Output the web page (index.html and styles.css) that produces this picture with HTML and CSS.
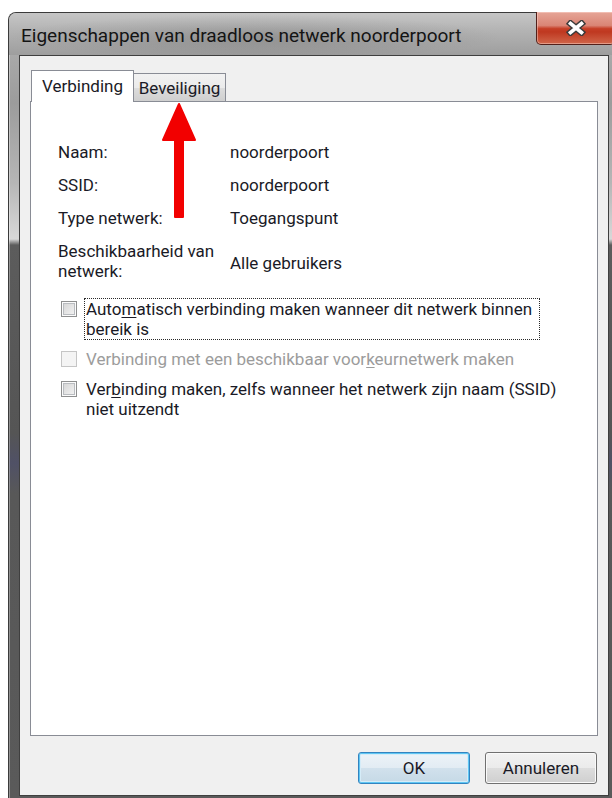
FILE: index.html
```html
<!DOCTYPE html>
<html lang="nl">
<head>
<meta charset="utf-8">
<title>Eigenschappen van draadloos netwerk noorderpoort</title>
<link rel="stylesheet" href="styles.css">
</head>
<body>
<div class="window">
  <div class="titlebar">
    <span class="title">Eigenschappen van draadloos netwerk noorderpoort</span>
    <button class="close" type="button" aria-label="Sluiten">
      <svg width="20" height="16" viewBox="0 0 20 16">
        <path d="M4.5 3.5 L15.5 12.5 M15.5 3.5 L4.5 12.5" stroke="#3b3b3b" stroke-width="6.5" stroke-linecap="square"/>
        <path d="M4.5 3.5 L15.5 12.5 M15.5 3.5 L4.5 12.5" stroke="#ffffff" stroke-width="3.6" stroke-linecap="square"/>
      </svg>
    </button>
  </div>
  <div class="client">
    <div class="tabs">
      <div class="tab active">Verbinding</div>
      <div class="tab">Beveiliging</div>
    </div>
    <div class="panel">
      <dl class="info">
        <dt>Naam:</dt><dd>noorderpoort</dd>
        <dt>SSID:</dt><dd>noorderpoort</dd>
        <dt>Type netwerk:</dt><dd>Toegangspunt</dd>
        <dt>Beschikbaarheid van<br>netwerk:</dt><dd class="value-mid">Alle gebruikers</dd>
      </dl>
      <div class="checks">
        <label class="check">
          <input type="checkbox" class="box">
          <span class="text focus">Auto<u>m</u>atisch verbinding maken wanneer dit netwerk binnen<br>bereik is</span>
        </label>
        <label class="check disabled">
          <input type="checkbox" class="box" disabled>
          <span class="text">Verbinding met een beschikbaar voor<u>k</u>eurnetwerk maken</span>
        </label>
        <label class="check">
          <input type="checkbox" class="box">
          <span class="text">Ver<u>b</u>inding maken, zelfs wanneer het netwerk zijn naam (SSID)<br>niet uitzendt</span>
        </label>
      </div>
    </div>
    <div class="buttons">
      <button class="btn default" type="button">OK</button>
      <button class="btn" type="button">Annuleren</button>
    </div>
  </div>
</div>

<svg class="arrow" width="40" height="120" viewBox="0 0 40 120" aria-hidden="true">
  <path d="M19 4 L35 40 L23 40 L23 117 L15 117 L15 40 L3 40 Z" fill="#f20000" stroke="#f20000" stroke-width="2" stroke-linejoin="round"/>
</svg>
</body>
</html>
```

FILE: styles.css
```css
html, body {
  margin: 0;
  padding: 0;
  background: #ffffff;
  width: 612px;
  height: 798px;
  overflow: hidden;
}

body {
  position: relative;
  font-family: Roboto, "Open Sans", sans-serif;
  font-size: 17px;
  color: #1a1a26;
}

/* Aero-style window frame */
.window {
  margin: 12px 0 0 8px;
  width: 608px;
  height: 792px;
  box-sizing: border-box;
  border: 1px solid #3b3b3b;
  border-bottom: none;
  border-radius: 8px 8px 0 0;
  background: linear-gradient(180deg,
    #b4b4b4 0, #9c9c9c 90px, #b6b6b6 170px, #d8d8d8 226px,
    #5c5c5c 232px, #555555 420px, #505166 450px, #585858 480px, #5a5a5a 100%);
  box-shadow: inset 1px 1px 0 rgba(255, 255, 255, 0.35);
  display: flex;
  flex-direction: column;
}

.titlebar {
  height: 42px;
  display: flex;
  align-items: flex-start;
  padding-left: 12px;
  border-radius: 7px 7px 0 0;
  background:
    radial-gradient(ellipse 290px 26px at 245px 24px, rgba(70, 70, 70, 0.26), rgba(70, 70, 70, 0) 85%),
    linear-gradient(180deg, #c6c6c6 0, #b4b4b4 40%, #9e9e9e 100%);
}

.title {
  margin-top: 10px;
  font-size: 19px;
  line-height: 25px;
  color: #141414;
  white-space: nowrap;
}

.close {
  margin: -1px 0 0 auto;
  width: 79px;
  height: 33px;
  padding: 0;
  border: 1px solid #52201a;
  border-top: none;
  border-radius: 0 0 5px 5px;
  background: linear-gradient(180deg,
    #e6a597 0%, #da8575 42%, #c63f27 52%, #bf3820 62%, #d0664a 100%);
  box-shadow: inset 0 0 0 1px rgba(255, 220, 210, 0.45);
  display: flex;
  align-items: center;
  justify-content: center;
}

/* dialog client area */
.client {
  margin: 0 6px 0 10px;
  border: 1px solid #3f3f3f;
  background: #f0f0f0;
  padding: 14px 10px 11px 10px;
  display: flex;
  flex-direction: column;
}

.tabs {
  height: 31px;
  display: flex;
  align-items: flex-end;
  padding-left: 1px;
}

.tab {
  box-sizing: border-box;
  border: 1px solid #898c95;
  border-bottom: none;
  line-height: 20px;
  text-align: center;
  white-space: nowrap;
}

.tab.active {
  position: relative;
  z-index: 1;
  width: 103px;
  height: 32px;
  margin-bottom: -1px;
  padding-top: 5px;
  background: #ffffff;
}

.tab:not(.active) {
  width: 93px;
  height: 28px;
  margin-left: -1px;
  padding-top: 4px;
  background: linear-gradient(180deg, #f2f2f2 0%, #ebebeb 50%, #dddddd 51%, #cfcfcf 100%);
}

.panel {
  height: 635px;
  box-sizing: border-box;
  border: 1px solid #898c95;
  background: #ffffff;
}

/* name / value pairs */
.info {
  margin: 40px 0 0 27px;
  display: grid;
  grid-template-columns: 172px auto;
  row-gap: 13px;
  line-height: 20px;
}

.info dt,
.info dd {
  margin: 0;
}

.info .value-mid {
  padding-top: 12px;
}

/* checkbox options */
.checks {
  margin: 17px 0 0 30px;
  display: flex;
  flex-direction: column;
  gap: 8px;
}

.check {
  display: flex;
  align-items: flex-start;
  gap: 7px;
}

.box {
  appearance: none;
  -webkit-appearance: none;
  flex: none;
  margin: 3px 0 0 0;
  width: 16px;
  height: 16px;
  box-sizing: border-box;
  border: 1px solid #8e8f8f;
  background: linear-gradient(135deg, #d2d2d2 0%, #f6f6f6 100%);
  box-shadow: inset 0 0 0 1px #fbfbfb, inset 0 0 0 2px #b9bcc0;
}

.text {
  border: 1px solid transparent;
  padding: 0 1px;
  line-height: 20px;
  white-space: nowrap;
}

.text u {
  text-decoration-thickness: 1px;
  text-underline-offset: 2px;
}

.text.focus {
  box-sizing: border-box;
  width: 456px;
  border: 1px dotted #2a2a2a;
}

.check.disabled .text {
  color: #9c9c9c;
}

.check.disabled .box {
  border-color: #c5c5c5;
  background: #f4f4f4;
  box-shadow: none;
}

/* dialog buttons */
.buttons {
  margin-top: 16px;
  display: flex;
  justify-content: flex-end;
  gap: 15px;
  padding-right: 1px;
}

.btn {
  width: 112px;
  height: 32px;
  padding: 0;
  font-family: inherit;
  font-size: 17px;
  color: #1a1a26;
  border: 1px solid #707070;
  border-radius: 3px;
  background: linear-gradient(180deg, #f2f2f2 0%, #ebebeb 50%, #dddddd 51%, #cfcfcf 100%);
  box-shadow: inset 0 0 0 1px #fafafa;
}

.btn.default {
  border-color: #3284c0;
  background: linear-gradient(180deg, #edf3f8 0%, #e2ecf3 50%, #d1e1ec 51%, #c5d9e6 100%);
  box-shadow: inset 0 0 0 1px #5fc6f3, inset 0 0 0 2px #d5ecf8;
}

/* red annotation arrow drawn over the dialog */
.arrow {
  position: absolute;
  left: 160px;
  top: 100px;
}
```
